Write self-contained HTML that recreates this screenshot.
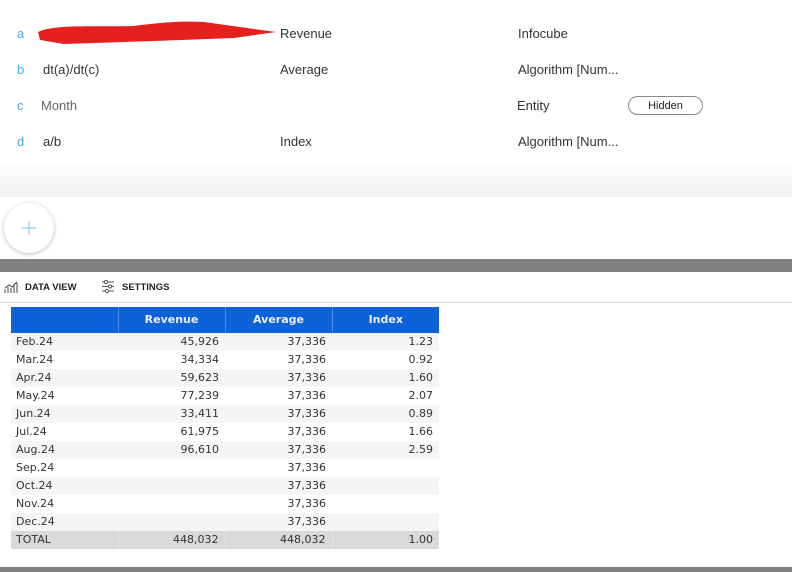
<!DOCTYPE html>
<html><head><style>
*{margin:0;padding:0;box-sizing:border-box}
body{width:792px;height:572px;position:relative;background:#fff;font-family:"Liberation Sans","DejaVu Sans",sans-serif;overflow:hidden}
.top{position:absolute;left:0;top:0;width:792px;height:197px;background:linear-gradient(#fff 0,#fff 160px,#f1f1f1 197px)}
.t{position:absolute;font-size:13px;color:#333;line-height:16px}
.l{color:#4aa8de}
.hid{position:absolute;left:628px;top:96px;width:75px;height:19px;border:1px solid #888;border-radius:10px;font-size:11px;text-align:center;line-height:19px;color:#222}
.plus{position:absolute;left:4px;top:203px;width:50px;height:50px;border-radius:50%;background:#fff;box-shadow:0 1px 4px rgba(0,0,0,.25)}
.bar{position:absolute;left:0;width:792px;background:#808080}
.tb{position:absolute;top:282px;font-size:9.5px;font-weight:bold;color:#222}
table{position:absolute;left:11px;top:307px;border-collapse:collapse;font-family:"DejaVu Sans",sans-serif;font-size:11px;color:#333}
td,th{width:107px;height:18px;padding:0 6px;text-align:right;line-height:18px}
th{height:26px;background:#0d62d8;color:#e8eefc;font-size:11px;text-align:center;border-left:1px solid #4d8ae6}
td:first-child{text-align:left;padding-left:5px}
tr.g td{background:#f4f5f7}
tr.tot td{background:#d9d9d9;border-left:1px solid #e6e6e6}
</style></head><body>
<div class="top"></div>
<svg style="position:absolute;left:34px;top:18px" width="246" height="30"><path d="M4 14 C20 6,60 9,100 8 C130 4,150 3,170 4 L242 14 L200 20 L120 23 L30 26 L6 22 Z" fill="#e5201f"/></svg>
<div class="t l" style="left:17px;top:26px">a</div>
<div class="t" style="left:280px;top:26px">Revenue</div>
<div class="t" style="left:518px;top:26px">Infocube</div>
<div class="t l" style="left:17px;top:62px">b</div>
<div class="t" style="left:43px;top:62px">dt(a)/dt(c)</div>
<div class="t" style="left:280px;top:62px">Average</div>
<div class="t" style="left:518px;top:62px">Algorithm [Num...</div>
<div class="t l" style="left:17px;top:98px">c</div>
<div class="t" style="left:41px;top:98px;color:#666">Month</div>
<div class="t" style="left:517px;top:98px">Entity</div>
<div class="hid">Hidden</div>
<div class="t l" style="left:17px;top:134px">d</div>
<div class="t" style="left:43px;top:134px">a/b</div>
<div class="t" style="left:280px;top:134px">Index</div>
<div class="t" style="left:518px;top:134px">Algorithm [Num...</div>
<div class="plus"><svg width="50" height="50"><path d="M25 18V32M18 25H32" stroke="#6cc6f2" stroke-width="1"/></svg></div>
<div class="bar" style="top:259px;height:13px"></div>
<svg style="position:absolute;left:4px;top:281px" width="14" height="12"><path d="M1 12V8M4 12V6M7 12V7M10 12V4M13 12V2M1 7L5 4L8 6L13 1" stroke="#444" fill="none"/></svg>
<div class="tb" style="left:25px">DATA VIEW</div>
<svg style="position:absolute;left:101px;top:280px" width="14" height="13"><path d="M1 2H13M1 6.5H13M1 11H13" stroke="#555"/><circle cx="5" cy="2" r="1.6" fill="#fff" stroke="#555"/><circle cx="9" cy="6.5" r="1.6" fill="#fff" stroke="#555"/><circle cx="6" cy="11" r="1.6" fill="#fff" stroke="#555"/></svg>
<div class="tb" style="left:122px">SETTINGS</div>
<div style="position:absolute;left:0;top:302px;width:792px;height:1px;background:#ddd"></div>
<table>
<tr><th style="border-left:none"></th><th>Revenue</th><th>Average</th><th>Index</th></tr>
<tr class="g"><td>Feb.24</td><td>45,926</td><td>37,336</td><td>1.23</td></tr>
<tr><td>Mar.24</td><td>34,334</td><td>37,336</td><td>0.92</td></tr>
<tr class="g"><td>Apr.24</td><td>59,623</td><td>37,336</td><td>1.60</td></tr>
<tr><td>May.24</td><td>77,239</td><td>37,336</td><td>2.07</td></tr>
<tr class="g"><td>Jun.24</td><td>33,411</td><td>37,336</td><td>0.89</td></tr>
<tr><td>Jul.24</td><td>61,975</td><td>37,336</td><td>1.66</td></tr>
<tr class="g"><td>Aug.24</td><td>96,610</td><td>37,336</td><td>2.59</td></tr>
<tr><td>Sep.24</td><td></td><td>37,336</td><td></td></tr>
<tr class="g"><td>Oct.24</td><td></td><td>37,336</td><td></td></tr>
<tr><td>Nov.24</td><td></td><td>37,336</td><td></td></tr>
<tr class="g"><td>Dec.24</td><td></td><td>37,336</td><td></td></tr>
<tr class="tot"><td style="border-left:none">TOTAL</td><td>448,032</td><td>448,032</td><td>1.00</td></tr>
</table>
<div class="bar" style="top:567px;height:5px"></div>
</body></html>
